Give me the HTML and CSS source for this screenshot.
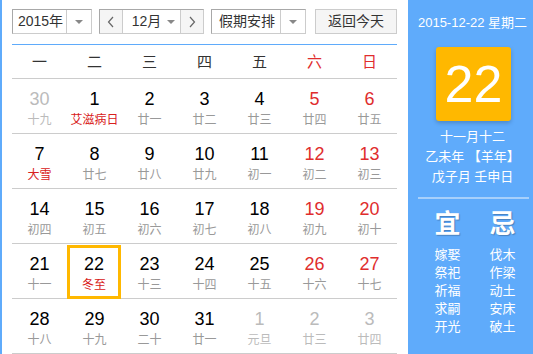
FILE: index.html
```html
<!DOCTYPE html>
<html lang="zh-CN">
<head>
<meta charset="UTF-8">
<title>万年历</title>
<link rel="stylesheet" href="styles.css">
</head>
<body>
<div class="cal">
  <div class="main">
    <div class="bar">
      <div class="sel year"><span class="val">2015年</span><span class="arr"></span></div>
      <div class="sel month">
        <span class="nav"><svg width="8" height="12" viewBox="0 0 8 12"><path d="M6 1L1.5 6L6 11" fill="none" stroke="#666" stroke-width="1.2"/></svg></span>
        <span class="val">12月<i class="arr-s"></i></span>
        <span class="nav"><svg width="8" height="12" viewBox="0 0 8 12"><path d="M2 1L6.5 6L2 11" fill="none" stroke="#666" stroke-width="1.2"/></svg></span>
      </div>
      <div class="sel holi"><span class="val">假期安排</span><span class="arr"></span></div>
      <div class="today">返回今天</div>
    </div>

    <div class="head">
      <span>一</span><span>二</span><span>三</span><span>四</span><span>五</span><span class="we">六</span><span class="we">日</span>
    </div>

    <div class="week">
      <div class="day other"><b>30</b><em>十九</em></div>
      <div class="day"><b>1</b><em class="fest">艾滋病日</em></div>
      <div class="day"><b>2</b><em>廿一</em></div>
      <div class="day"><b>3</b><em>廿二</em></div>
      <div class="day"><b>4</b><em>廿三</em></div>
      <div class="day we"><b>5</b><em>廿四</em></div>
      <div class="day we"><b>6</b><em>廿五</em></div>
    </div>
    <div class="week">
      <div class="day"><b>7</b><em class="fest">大雪</em></div>
      <div class="day"><b>8</b><em>廿七</em></div>
      <div class="day"><b>9</b><em>廿八</em></div>
      <div class="day"><b>10</b><em>廿九</em></div>
      <div class="day"><b>11</b><em>初一</em></div>
      <div class="day we"><b>12</b><em>初二</em></div>
      <div class="day we"><b>13</b><em>初三</em></div>
    </div>
    <div class="week">
      <div class="day"><b>14</b><em>初四</em></div>
      <div class="day"><b>15</b><em>初五</em></div>
      <div class="day"><b>16</b><em>初六</em></div>
      <div class="day"><b>17</b><em>初七</em></div>
      <div class="day"><b>18</b><em>初八</em></div>
      <div class="day we"><b>19</b><em>初九</em></div>
      <div class="day we"><b>20</b><em>初十</em></div>
    </div>
    <div class="week">
      <div class="day"><b>21</b><em>十一</em></div>
      <div class="day now"><b>22</b><em class="fest">冬至</em></div>
      <div class="day"><b>23</b><em>十三</em></div>
      <div class="day"><b>24</b><em>十四</em></div>
      <div class="day"><b>25</b><em>十五</em></div>
      <div class="day we"><b>26</b><em>十六</em></div>
      <div class="day we"><b>27</b><em>十七</em></div>
    </div>
    <div class="week">
      <div class="day"><b>28</b><em>十八</em></div>
      <div class="day"><b>29</b><em>十九</em></div>
      <div class="day"><b>30</b><em>二十</em></div>
      <div class="day"><b>31</b><em>廿一</em></div>
      <div class="day other"><b>1</b><em>元旦</em></div>
      <div class="day other"><b>2</b><em>廿三</em></div>
      <div class="day other"><b>3</b><em>廿四</em></div>
    </div>
  </div>

  <div class="side">
    <div class="date">2015-12-22 星期二</div>
    <div class="big">22</div>
    <div class="lunar">
      <p>十一月十二</p>
      <p>乙未年 【羊年】</p>
      <p>戊子月 壬申日</p>
    </div>
    <div class="line"></div>
    <div class="yiji">
      <div class="col">
        <h3>宜</h3>
        <p>嫁娶</p><p>祭祀</p><p>祈福</p><p>求嗣</p><p>开光</p>
      </div>
      <div class="col">
        <h3>忌</h3>
        <p>伐木</p><p>作梁</p><p>动土</p><p>安床</p><p>破土</p>
      </div>
    </div>
  </div>
</div>
</body>
</html>
```

FILE: styles.css
```css
body{margin:0;background:#fff;font-family:"Liberation Sans","Noto Sans CJK SC",sans-serif;color:#333;}
.cal{display:flex;height:354px;overflow:hidden;}

/* 左边日历 */
.main{width:385px;border-left:2px solid #5fabfb;padding:9px 11px 0 10px;}
.bar{display:flex;height:25px;}
.sel{display:flex;height:23px;border:1px solid #a8a8a8;border-right-color:#ccc;border-bottom-color:#ccc;font-size:14px;line-height:23px;margin-right:7px;}
.sel .val{flex:1;text-align:center;}
.sel .arr{width:24px;border-left:1px solid #ccc;position:relative;}
.sel .arr::after{content:"";position:absolute;left:8px;top:10px;border:4px solid transparent;border-top:4px solid #888;border-bottom:0;}
.year{width:78px;}
.year .val{padding-left:2px;}
.month{width:103px;}
.month .nav{width:22px;background:#f5f5f5;display:flex;align-items:center;justify-content:center;}
.month .nav:first-child{border-right:1px solid #ccc;}
.month .nav:last-child{border-left:1px solid #ccc;}
.month .val{padding-left:4px;}
.arr-s{display:inline-block;margin-left:6px;vertical-align:middle;border:4px solid transparent;border-top:4px solid #888;border-bottom:0;}
.holi{width:93px;margin-right:9px;}
.holi .val{padding-left:2px;}
.today{width:80px;height:23px;border:1px solid #ccc;background:#f5f5f5;font-size:14px;line-height:23px;text-align:center;}

.head{display:grid;grid-template-columns:repeat(7,55px);margin-top:10px;border-top:1px solid #5fabfb;border-bottom:1px solid #ccc;height:33px;line-height:33px;font-size:15px;text-align:center;}
.head .we{color:#e02d2d;}

.week{display:grid;grid-template-columns:repeat(7,55px);height:54px;border-bottom:1px solid #ccc;}
.day{text-align:center;padding-top:10px;}
.day b{display:block;font-weight:normal;font-size:18px;line-height:20px;color:#000;}
.day em{display:block;font-style:normal;font-size:12px;line-height:18px;margin-top:2px;color:#999;}
.day.we b{color:#e02d2d;}
.day em.fest{color:#d82020;}
.day.other b,.day.other em{color:#bbb;}
.day.now{box-shadow:inset 0 0 0 3px #ffb800;margin-top:1px;padding-top:9px;height:45px;margin-right:1px;}

/* 右边信息 */
.side{width:125px;background:#5fabfb;color:#fff;}
.date{text-align:center;font-size:13px;margin-top:14px;padding-left:4px;line-height:18px;}
.big{width:75px;height:74px;margin:15px 0 0 28px;background:#ffb800;border-radius:3px;box-shadow:0 2px 4px rgba(0,0,0,.2);font-size:52px;line-height:74px;text-align:center;}
.lunar{margin-top:6px;text-align:center;font-size:13px;padding-left:4px;}
.lunar p{margin:0;line-height:20px;}
.line{height:2px;background:#a7d0fb;margin:10px 4px 0 10px;}
.yiji{display:flex;padding-left:12px;margin-top:10px;}
.col{width:55px;text-align:center;}
.col h3{margin:0 0 7px;font-size:26px;line-height:30px;font-weight:bold;text-shadow:1px 1px 1px rgba(0,0,0,.25);}
.col p{margin:0;font-size:13px;line-height:18px;}
```
